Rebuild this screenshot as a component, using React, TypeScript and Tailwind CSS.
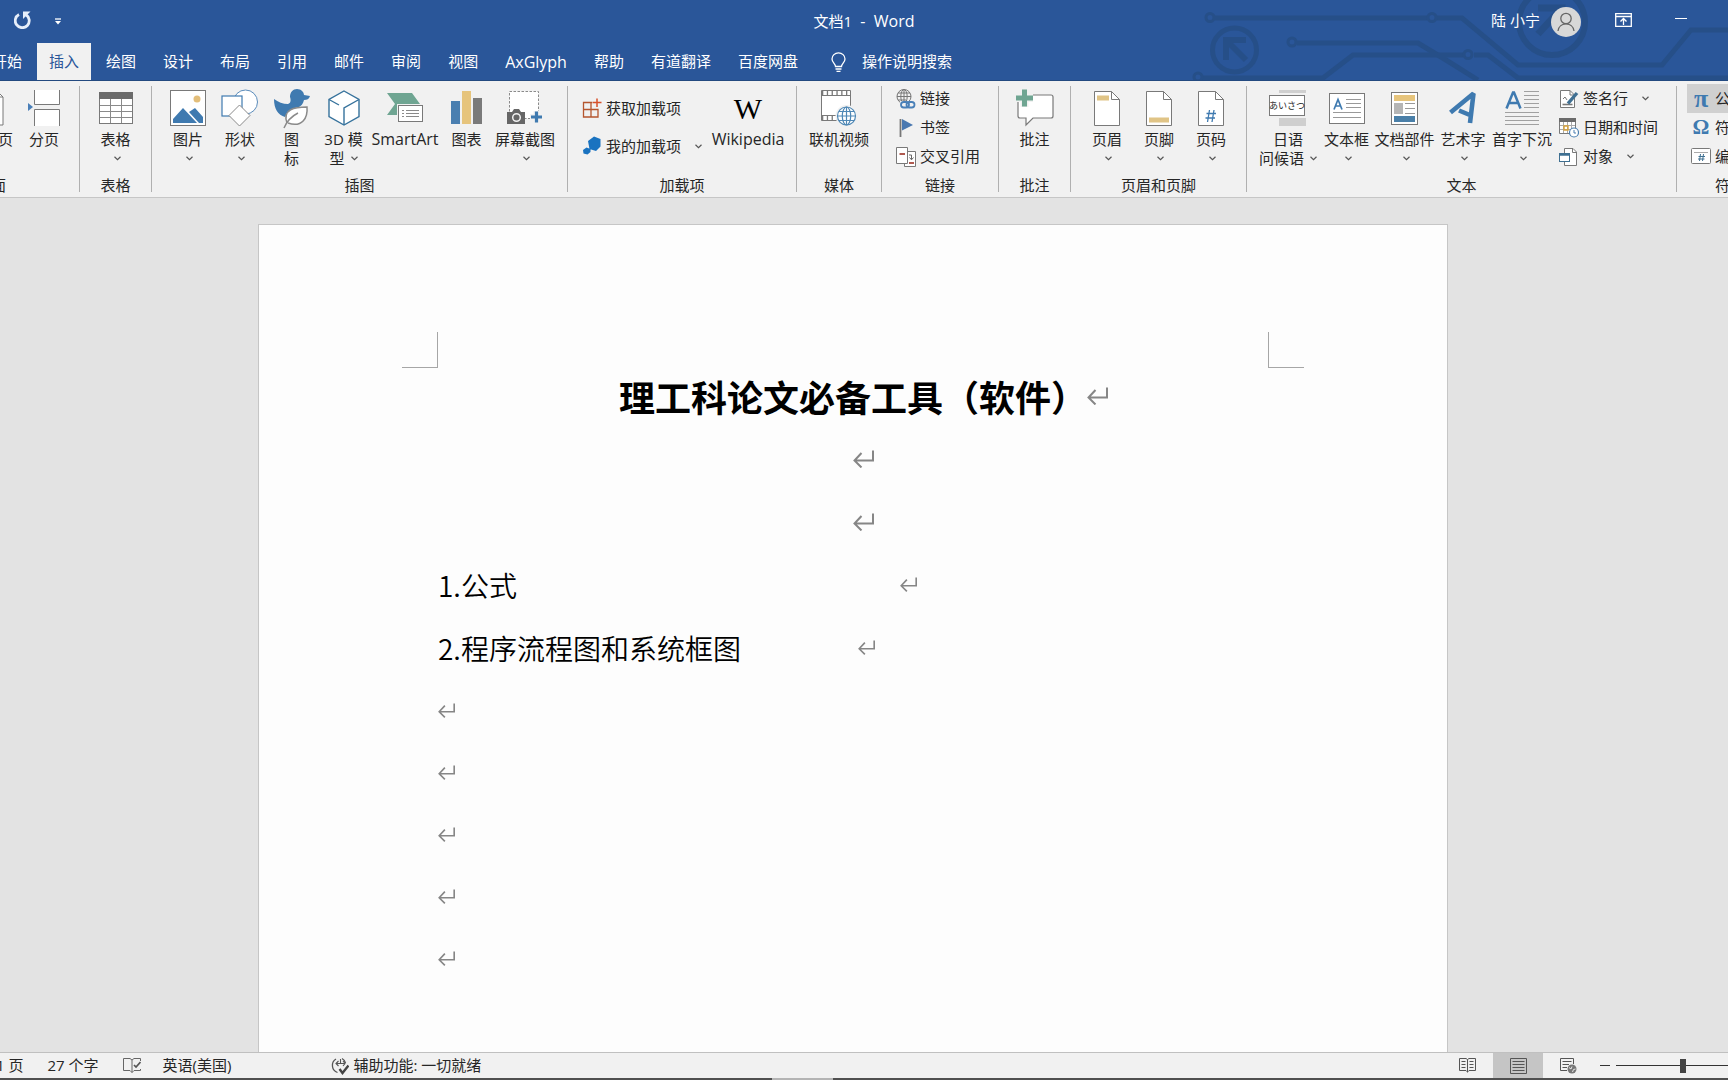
import React from "react";

type P = { children?: React.ReactNode };
const GREY = "#797979";
const BLUE = "#3f7ab0";

function Svg({ w, h, children }: { w: number; h: number } & P) {
  return (
    <svg width={w} height={h} viewBox={`0 0 ${w} ${h}`} fill="none" className="shrink-0" aria-hidden="true">
      {children}
    </svg>
  );
}

const Chevron = () => (
  <Svg w={7} h={5}>
    <path d="M0.5 0.8 3.5 3.6 6.5 0.8" stroke="#555" strokeWidth="1.2" />
  </Svg>
);

function Return({ big }: { big?: boolean }) {
  return (
    <svg width={big ? 21 : 17} height={big ? 18 : 15} viewBox="0 0 21 18" fill="none" className="shrink-0" aria-hidden="true">
      <path d="M20 0.5V10.5H1.5M8.5 3 1.5 10.5 8.5 17.5" stroke="#868686" strokeWidth="2" />
    </svg>
  );
}

/* ---------- large icons ---------- */
const BlankPageIcon = () => (
  <Svg w={26} h={36}>
    <path d="M1 1H19L25 7V35H1Z" fill="#fff" stroke={GREY} />
    <path d="M19 1V7H25" stroke={GREY} />
  </Svg>
);
const BreakIcon = () => (
  <Svg w={36} h={38}>
    <path d="M8.500 1V15.500H33.500V1M8.500 37V20.500H33.500V37" fill="#fff" stroke={GREY} />
    <path d="M2 14 7 18 2 22Z" fill="#4a7fb8" />
  </Svg>
);
const TableIcon = () => (
  <Svg w={34} h={32}>
    <rect x="0.5" y="0.5" width="33" height="31" fill="#fff" stroke={GREY} />
    <rect width="34" height="7" fill="#6b6b6b" />
    <path d="M11.500 7V31M22.500 7V31M1 13.500H33M1 19.500H33M1 25.500H33" stroke="#8a8a8a" />
  </Svg>
);
const PictureIcon = () => (
  <Svg w={36} h={36}>
    <rect x="0.5" y="0.5" width="35" height="35" fill="#fff" stroke={GREY} />
    <circle cx="27" cy="9" r="3.500" fill="#e3be7a" />
    <path d="M3 33V29L13 18 27 33ZM19 22 25 18 33 27V33H29Z" fill={BLUE} />
  </Svg>
);
const ShapesIcon = () => (
  <Svg w={38} h={38}>
    <circle cx="24.500" cy="13" r="12" fill="#fff" stroke="#5b8cbb" />
    <rect x="1" y="7" width="20" height="20" fill="#fff" stroke={BLUE} strokeWidth="1.200" />
    <path d="M18.500 16 29 26.500 18.500 37 8 26.500Z" fill="#fff" stroke="#8a8a8a" />
  </Svg>
);
const IconsIcon = () => (
  <Svg w={36} h={40}>
    <path d="M16 8C16 3 19 0 23 0C27 0 30 3 30 6L36 7C35 10 33 11 30 11C29 15 27 17 25 18C18 19 14 22 11 28C4 26 0 20 0 10C4 13 9 15 14 15C17 14 17 11 16 8Z" fill={BLUE} />
    <path d="M13 34C8 20 21 18 33 18C34 29 28 39 14 34" fill="#fff" stroke="#8a8a8a" strokeWidth="1.500" />
    <path d="M10 39C13 32 18 27 24 24" stroke="#8a8a8a" strokeWidth="1.500" />
  </Svg>
);
const CubeIcon = () => (
  <Svg w={32} h={36}>
    <path d="M16 1 31 9.500V26.500L16 35 1 26.500V9.500Z" fill="#fff" stroke="#36729c" strokeWidth="1.400" />
    <path d="M16 35V18L31 9.500M1 9.500 11 15" stroke="#36729c" strokeWidth="1.400" />
  </Svg>
);
const SmartArtIcon = () => (
  <Svg w={36} h={30}>
    <path d="M0 0H25L33 11 25 22H0L8 11Z" fill="#6fa592" />
    <rect x="10" y="11" width="26" height="19" fill="#f1f1f1" />
    <rect x="11.500" y="12.500" width="24" height="16" fill="#fff" stroke={GREY} />
    <path d="M15 17.500H17M15 20.500H17M15 23.500H17M19 17.500H32M19 20.500H32M19 23.500H32" stroke="#8a8a8a" />
  </Svg>
);
const ChartIcon = () => (
  <Svg w={32} h={34}>
    <rect x="0" y="10" width="9" height="23" fill="#4a7fb0" />
    <rect x="11" y="0" width="9" height="33" fill="#e6c47c" />
    <rect x="22" y="7" width="9" height="26" fill="#7a7a7a" />
  </Svg>
);
const ScreenshotIcon = () => (
  <Svg w={36} h={34}>
    <rect x="2.500" y="0.500" width="29" height="27" fill="#fff" stroke="#8a8a8a" strokeDasharray="2.500 1.500" />
    <path d="M0 21H5L7 18H12L14 21H18V33H0Z" fill="#666" />
    <circle cx="9.500" cy="26.500" r="3.800" fill="#666" stroke="#f1f1f1" strokeWidth="1.500" />
    <path d="M23 26H36M29.500 20V32" stroke="#f1f1f1" strokeWidth="6" />
    <path d="M24 26H35M29.500 20.500V31.500" stroke={BLUE} strokeWidth="3.200" />
  </Svg>
);
const VideoIcon = () => (
  <Svg w={36} h={36}>
    <path d="M0.500 0.500H29.500V30.500H0.500Z" fill="#fff" stroke={GREY} />
    <path d="M0 5.500H30M0 25.500H16" stroke={GREY} />
    <path d="M1 3H29M1 28H16" stroke={GREY} strokeWidth="4" strokeDasharray="1.300 3.500" />
    <circle cx="25.500" cy="26" r="11" fill="#f1f1f1" />
    <g stroke="#4f88b5" strokeWidth="1.200">
      <circle cx="25.500" cy="26" r="9" fill="#fff" />
      <ellipse cx="25.500" cy="26" rx="4.200" ry="9" />
      <path d="M25.500 17V35M16.500 26H34.500M18 21.500H33M18 30.500H33" />
    </g>
  </Svg>
);
const CommentIcon = () => (
  <Svg w={38} h={38}>
    <path d="M6 6H35Q37 6 37 8V27Q37 29 35 29H17L10 36V29H4Q2 29 2 27V8" fill="#fff" stroke={GREY} strokeWidth="1.200" />
    <path d="M8.500 0V18M0 9H17" stroke="#f1f1f1" strokeWidth="8" />
    <path d="M8.500 0.500V17.500M0 9H17" stroke="#6fa592" strokeWidth="5" />
  </Svg>
);
function DocIcon({ children }: P) {
  return (
    <Svg w={26} h={35}>
      <path d="M0.500 0.500H17.500L25.500 8.500V34.500H0.500Z" fill="#fff" stroke={GREY} />
      <path d="M17.500 0.500V8.500H25.500" stroke={GREY} />
      {children}
    </Svg>
  );
}
const HeaderIcon = () => <DocIcon><rect x="3" y="4.500" width="12" height="5" fill="#e0c486" /></DocIcon>;
const FooterIcon = () => <DocIcon><rect x="3" y="26.500" width="20" height="5" fill="#e0c486" /></DocIcon>;
const NumberIcon = () => <DocIcon><path d="M11.500 19 9.500 31M16 19 14 31M8.500 22.500H18M7.500 27H17" stroke={BLUE} strokeWidth="1.300" /></DocIcon>;
const GreetingIcon = () => (
  <span className="flex h-9 w-[38px] items-start bg-[linear-gradient(#cfcfcf,#cfcfcf)] bg-[length:27px_36px] bg-[position:10px_0] bg-no-repeat pt-[5px]">
    <span className="flex h-[21px] w-[36px] items-center justify-center border border-[#797979] bg-white text-[9px] leading-none ring-2 ring-[#f1f1f1]">
      <span className="whitespace-nowrap">あいさつ</span>
    </span>
  </span>
);
const TextBoxIcon = () => (
  <Svg w={36} h={31}>
    <rect x="0.500" y="0.500" width="35" height="30" fill="#fff" stroke={GREY} />
    <path d="M5 16.500 9 6.500 13 16.500M6.500 13H11.500" stroke={BLUE} strokeWidth="1.700" />
    <path d="M17 6.500H32M17 10.500H32M17 14.500H32M4 19.500H32M4 24.500H32" stroke="#999" />
  </Svg>
);
const PartsIcon = () => (
  <Svg w={27} h={33}>
    <rect x="0.500" y="0.500" width="26" height="32" fill="#fff" stroke={GREY} />
    <rect x="3" y="3" width="21" height="6" fill="#e6c47c" />
    <rect x="3" y="11" width="9" height="11" fill="#b5b5b5" />
    <path d="M14 11.500H24M14 16.500H24M14 21.500H24" stroke="#999" />
    <rect x="3" y="24" width="21" height="6" fill="#4a7fa8" />
  </Svg>
);
const WordArtIcon = () => (
  <Svg w={28} h={34}>
    <path d="M1.500 21.500 24.500 2.500 21 32M10 19.500 22 24.500" stroke={BLUE} strokeWidth="4.600" strokeLinejoin="bevel" />
  </Svg>
);
const DropCapIcon = () => (
  <Svg w={35} h={34}>
    <path d="M1.500 17.500 8 1.500H9L15.500 17.500M4 12H13" stroke={BLUE} strokeWidth="2.500" />
    <path d="M19 0.500H34M19 4.500H34M19 8.500H34M19 12.500H34M19 16.500H34M0 21.500H34M0 25.500H34M0 29.500H34M0 33.500H34" stroke="#a0a0a0" />
  </Svg>
);

/* ---------- small icons ---------- */
const AddinIcon = () => (
  <Svg w={20} h={20}>
    <path d="M1.500 4.500H9V19H1.500ZM1.500 11.500H16V19H9M9 11.500V4.500H10.500" stroke="#b5562f" strokeWidth="1.300" />
    <path d="M15 0.500V9M11 4.500H19.500" stroke="#d8502a" strokeWidth="1.500" />
  </Svg>
);
const MyAddinIcon = () => (
  <Svg w={20} h={20}>
    <path d="M12 0.500 18.500 3V10.500L14 15 7.500 13 6 5ZM4.500 11.500 8.500 13 8.500 16 5.500 18.500 1.500 17.500 1 14Z" fill="#1a73c0" />
  </Svg>
);
const LinkIcon = () => (
  <Svg w={20} h={20}>
    <g stroke="#777">
      <circle cx="8" cy="7.500" r="7" />
      <ellipse cx="8" cy="7.500" rx="3.200" ry="7" />
      <path d="M8 .5V14M1 7.500H15M2 4H14M2 11H10" />
    </g>
    <path d="M4 12H20V20H4Z" fill="#f1f1f1" />
    <rect x="5" y="13" width="8" height="5.500" rx="2.700" stroke="#4a80b8" strokeWidth="1.800" />
    <rect x="10.500" y="13" width="8" height="5.500" rx="2.700" stroke="#4a80b8" strokeWidth="1.800" />
  </Svg>
);
const BookmarkIcon = () => (
  <Svg w={20} h={20}>
    <path d="M4.500 1V19" stroke="#777" strokeWidth="1.800" />
    <path d="M6 1 17 7 6 12.500Z" fill="#4a78b0" />
  </Svg>
);
const CrossRefIcon = () => (
  <Svg w={20} h={20}>
    <path d="M8.500 4.500H19.500V19.500H8.500Z" fill="#fff" stroke={GREY} />
    <path d="M0.500 0.500H11.500V16.500H0.500Z" fill="#fff" stroke={GREY} />
    <path d="M3.500 7H9M13 16H18" stroke="#b05a50" strokeWidth="1.800" />
    <path d="M13 8H15.500V12.500M13.500 10.500 15.500 12.800 17.500 10.500" stroke="#666" />
  </Svg>
);
const SignIcon = () => (
  <Svg w={20} h={20}>
    <path d="M1.500 1.500H11L15.500 6V18.500H1.500Z" fill="#fff" stroke={GREY} />
    <path d="M11 1.500V6H15.500" stroke={GREY} />
    <path d="M3.500 15.500H13.500" stroke="#777" strokeWidth="1.600" />
    <path d="M18 4 9 14.500" stroke="#3f6f92" strokeWidth="3.400" />
    <path d="M4 10 6 8 8 11" stroke="#777" />
  </Svg>
);
const DateIcon = () => (
  <Svg w={20} h={20}>
    <path d="M0.500 0.500H16.500V15.500H0.500Z" fill="#fff" stroke={GREY} />
    <path d="M0 0H17V4H0Z" fill="#6b6b6b" />
    <path d="M4.500 4V15M8.500 4V15M12.500 4V15M1 7.500H16M1 11.500H16" stroke="#aaa" />
    <path d="M5 8H9V12H5Z" stroke="#d6a23c" strokeWidth="1.400" />
    <circle cx="15" cy="14.500" r="4.500" fill="#fff" stroke="#4a7fb0" strokeWidth="1.200" />
    <path d="M15 12V15H17" stroke="#4a7fb0" />
  </Svg>
);
const ObjectIcon = () => (
  <Svg w={20} h={20}>
    <path d="M5.500 1.500H14L17.500 5V18.500H5.500Z" fill="#fff" stroke={GREY} />
    <path d="M13.500 1.500V5.500H17.500" stroke={GREY} />
    <rect x="0.500" y="6.500" width="10" height="8" fill="#fff" stroke="#3f7092" />
    <path d="M0 7.500H11" stroke="#3f7092" strokeWidth="2.500" />
  </Svg>
);
const NumberBoxIcon = () => (
  <Svg w={20} h={17}>
    <rect x="0.500" y="0.500" width="19" height="15" rx="1" fill="#fff" stroke={GREY} />
    <path d="M3 4.500H17" stroke="#aaa" />
    <path d="M9.500 6 8.500 13M12.500 6 11.500 13M7.500 8.500H14M7 11H13.500" stroke="#3f7092" />
  </Svg>
);

/* ---------- ribbon parts ---------- */
function Group({ label, labelClass = "", children }: { label: string; labelClass?: string } & P) {
  return (
    <section aria-label={label} className="flex shrink-0">
      <div className="flex flex-col">
        <div className="flex h-[94px]">{children}</div>
        <div className={"text-center leading-5 " + labelClass}>{label}</div>
      </div>
      <div className="mt-[5px] h-[106px] w-px bg-[#b0b0b0]" />
    </section>
  );
}

function Big({ icon, label, label2, drop, w, latin }: { icon: React.ReactNode; label: string; label2?: string; drop?: boolean; w: string; latin?: boolean }) {
  return (
    <button type="button" className={"flex shrink-0 flex-col items-center whitespace-nowrap pt-2 leading-[19px] " + w}>
      <span className="mb-[3px] grid h-[38px] place-items-center">{icon}</span>
      <span className={latin ? "text-base leading-[19px]" : ""}>{label}</span>
      {(label2 || drop) && (
        <span className="flex h-[19px] items-center gap-1">
          {label2}
          {drop && <span className={label2 ? "pl-0.5" : "pl-[3px]"}><Chevron /></span>}
        </span>
      )}
    </button>
  );
}

function Small({ icon, label, drop, h = "h-[29px]", className = "" }: { icon: React.ReactNode; label: string; drop?: boolean; h?: string; className?: string }) {
  return (
    <button type="button" className={"flex shrink-0 items-center gap-1 whitespace-nowrap " + h + " " + className}>
      {icon}
      <span>{label}</span>
      {drop && <span className="pl-[10px]"><Chevron /></span>}
    </button>
  );
}

const tabs = ["开始", "插入", "绘图", "设计", "布局", "引用", "邮件", "审阅", "视图", "AxGlyph", "帮助", "有道翻译", "百度网盘"];

function Circuit() {
  return (
    <svg width="540" height="80" viewBox="0 0 540 80" fill="none" className="absolute right-0 top-0" aria-hidden="true">
      <g stroke="#264e86" strokeWidth="5" opacity="0.85">
        <circle cx="22" cy="17.500" r="4" strokeWidth="3" />
        <path d="M27 18H239M249 18H274L330 65H474L503 30H540" />
        <circle cx="244" cy="17.500" r="4" strokeWidth="3" />
        <circle cx="104" cy="42" r="4" strokeWidth="3" />
        <path d="M109 43H230L258 60 290 80" />
        <path d="M13 78H135L165 55H275M286 55H300L330 78H540" />
        <circle cx="280" cy="54.500" r="4" strokeWidth="3" />
        <circle cx="10" cy="77" r="4" strokeWidth="3" />
        <circle cx="46.500" cy="50" r="22" />
        <path d="M38 60V40H58M38 40 58 60" strokeWidth="6" />
        <circle cx="364" cy="22" r="33" strokeWidth="6" />
        <path d="M350 8H374V30M374 8 350 34" strokeWidth="7" />
      </g>
    </svg>
  );
}

export default function App() {
  return (
    <div className="flex h-screen flex-col overflow-hidden bg-[#e3e3e3] font-['Open_Sans','Noto_Sans_CJK_SC',sans-serif] text-[15px] text-[#262626]">
      <header className="relative shrink-0 overflow-hidden border-b border-[#234a80] bg-[#2a5699] text-white">
        <Circuit />
        <div className="relative grid h-[43px] grid-cols-[1fr_auto_1fr] items-center">
          <div className="flex items-center gap-6 pl-[14px]">
            <button type="button" aria-label="重复" className="pb-[3px]">
              <Svg w={17} h={18}>
                <path d="M5 3.500A7 7 0 1 0 12 3.800" stroke="#e6eefa" strokeWidth="2.800" />
                <path d="M9 0.500H16.500L9 8Z" fill="#e6eefa" />
              </Svg>
            </button>
            <button type="button" aria-label="自定义快速访问工具栏">
              <Svg w={6} h={7}>
                <path d="M0 1H6" stroke="#fff" strokeWidth="1.300" />
                <path d="M0 3H6L3 6.500Z" fill="#fff" />
              </Svg>
            </button>
          </div>
          <h1 className="whitespace-pre">文档1<span className="text-base leading-5">{"  -  Word"}</span></h1>
          <div className="flex items-center justify-end pr-[41px]">
            <span className="pb-0.5">陆 小宁</span>
            <span className="ml-[11px] grid h-[30px] w-[30px] place-items-center rounded-full bg-[#d8d8d8]">
              <Svg w={18} h={20}>
                <circle cx="9" cy="6.500" r="5.200" stroke="#666" strokeWidth="1.300" />
                <path d="M1 19C2 9.500 16 9.500 17 19" stroke="#666" strokeWidth="1.300" />
              </Svg>
            </span>
            <button type="button" aria-label="功能区显示选项" className="ml-[34px] pb-1">
              <Svg w={17} h={14}>
                <path d="M0.700 0.700H16.300V13.300H0.700ZM1 3.500H16" stroke="#fff" strokeWidth="1.300" />
                <path d="M8.500 12V6M5.500 8.500 8.500 5.500 11.500 8.500" stroke="#fff" strokeWidth="1.300" />
              </Svg>
            </button>
            <button type="button" aria-label="最小化" className="ml-[43px] h-5 w-3 pb-1.5">
              <span className="block h-px w-3 bg-white" />
            </button>
          </div>
        </div>
        <nav className="relative -ml-5 flex h-[37px] items-stretch gap-[3px] whitespace-nowrap">
          {tabs.map((t) => (
            <button
              key={t}
              type="button"
              className={t === "插入" ? "bg-[#f1f1f1] px-3 text-[#2a5699]" : t === "AxGlyph" ? "px-3 text-base" : "px-3"}
            >
              {t}
            </button>
          ))}
          <button type="button" className="flex items-center gap-4 pl-[18px]">
            <Svg w={15} h={20}>
              <path d="M4.500 14.500C4.500 11.500 1 10.500 1 7A6.500 6.200 0 0 1 14 7C14 10.500 10.500 11.500 10.500 14.500Z" stroke="#fff" strokeWidth="1.300" />
              <path d="M4.500 17H10.500M5.500 19.300H9.500" stroke="#fff" strokeWidth="1.300" />
            </Svg>
            操作说明搜索
          </button>
        </nav>
      </header>

      <div className="flex h-[117px] shrink-0 overflow-hidden border-b border-[#c6c6c6] bg-[#f1f1f1]">
        <div className="-ml-9 flex shrink-0">
          <Group label="页面" labelClass="w-[54px]">
            <Big icon={<BlankPageIcon />} label="空白页" w="w-[53px]" />
            <Big icon={<BreakIcon />} label="分页" w="w-[54px] mr-2" />
          </Group>
          <Group label="表格">
            <Big icon={<TableIcon />} label="表格" drop w="w-[71px]" />
          </Group>
          <Group label="插图">
            <Big icon={<PictureIcon />} label="图片" drop w="ml-[10px] w-[52px]" />
            <Big icon={<ShapesIcon />} label="形状" drop w="w-[52px]" />
            <Big icon={<IconsIcon />} label="图" label2="标" w="w-[51px]" />
            <Big icon={<CubeIcon />} label="3D 模" label2="型" drop w="w-[53px]" />
            <Big icon={<SmartArtIcon />} label="SmartArt" latin w="w-[70px]" />
            <Big icon={<ChartIcon />} label="图表" w="w-[53px]" />
            <Big icon={<ScreenshotIcon />} label="屏幕截图" drop w="w-[64px] mr-[10px]" />
          </Group>
          <Group label="加载项">
            <div className="flex w-[138px] flex-col pl-[14px] pt-2">
              <Small icon={<AddinIcon />} label="获取加载项" h="h-[38px]" />
              <Small icon={<MyAddinIcon />} label="我的加载项" h="h-[38px]" drop />
            </div>
            <Big icon={<span className="font-['Liberation_Serif',serif] text-[30px] text-black">W</span>} label="Wikipedia" latin w="w-[84px] mr-[6px]" />
          </Group>
          <Group label="媒体">
            <Big icon={<VideoIcon />} label="联机视频" w="w-[84px]" />
          </Group>
          <Group label="链接">
            <div className="flex w-[116px] flex-col pl-[14px] pt-[3px]">
              <Small icon={<LinkIcon />} label="链接" />
              <Small icon={<BookmarkIcon />} label="书签" />
              <Small icon={<CrossRefIcon />} label="交叉引用" />
            </div>
          </Group>
          <Group label="批注">
            <Big icon={<CommentIcon />} label="批注" w="w-[71px]" />
          </Group>
          <Group label="页眉和页脚">
            <Big icon={<HeaderIcon />} label="页眉" drop w="ml-[10px] w-[52px]" />
            <Big icon={<FooterIcon />} label="页脚" drop w="w-[52px]" />
            <Big icon={<NumberIcon />} label="页码" drop w="w-[52px] mr-[9px]" />
          </Group>
          <Group label="文本">
            <Big icon={<GreetingIcon />} label="日语" label2="问候语" drop w="ml-[10px] w-[62px]" />
            <Big icon={<TextBoxIcon />} label="文本框" drop w="w-[55px]" />
            <Big icon={<PartsIcon />} label="文档部件" drop w="w-[61px]" />
            <Big icon={<WordArtIcon />} label="艺术字" drop w="w-[56px]" />
            <Big icon={<DropCapIcon />} label="首字下沉" drop w="w-[62px]" />
            <div className="flex w-[123px] flex-col pl-[6px] pt-[3px]">
              <Small icon={<SignIcon />} label="签名行" drop />
              <Small icon={<DateIcon />} label="日期和时间" />
              <Small icon={<ObjectIcon />} label="对象" drop />
            </div>
          </Group>
          <Group label="符号">
            <div className="flex w-[106px] flex-col pl-[10px] pt-[3px]">
              <Small className="bg-[#d0d0d0] pl-1" icon={<span className="w-5 text-center font-['Liberation_Serif',serif] text-[26px] font-bold leading-none text-[#3f7ab0]">π</span>} label="公式" />
              <Small className="pl-1" icon={<span className="w-5 text-center font-['Liberation_Serif',serif] text-[21px] font-bold leading-none text-[#3f7ab0]">Ω</span>} label="符号" />
              <Small className="pl-1" icon={<NumberBoxIcon />} label="编号" />
            </div>
          </Group>
        </div>
      </div>

      <main className="flex min-h-0 flex-1 justify-center overflow-hidden pr-[22px] pt-[26px]">
        <article className="w-full max-w-[1190px] border border-b-0 border-[#c6c6c6] bg-[#fdfdfd] pt-[107px] font-['Noto_Sans_CJK_SC',sans-serif] text-black">
          <div className="flex h-8 justify-between px-[143px]">
            <div className="h-9 w-9 border-b border-r border-[#a6a6a6]" />
            <div className="h-9 w-9 border-b border-l border-[#a6a6a6]" />
          </div>
          <div className="px-[179px]">
            <h2 className="flex h-[63px] items-center justify-center pl-[21px] text-[36px] font-bold">
              理工科论文必备工具（软件）
              <Return big />
            </h2>
            <div className="flex h-[63px] items-center justify-center pl-[21px]"><Return big /></div>
            <div className="flex h-[63px] items-center justify-center pl-[21px]"><Return big /></div>
            <p className="flex h-[63px] items-center text-[28px] font-[350]">
              <span className="w-[462px]">1.公式</span>
              <Return />
            </p>
            <p className="flex h-[63px] items-center text-[28px] font-[350]">
              <span className="w-[420px]">2.程序流程图和系统框图</span>
              <Return />
            </p>
            {[0, 1, 2, 3, 4].map((i) => (
              <p key={i} className="flex h-[62px] items-center"><Return /></p>
            ))}
          </div>
        </article>
      </main>

      <footer className="flex h-[26px] shrink-0 items-center overflow-hidden whitespace-nowrap border-t border-t-[#c0c0c0] bg-[#f1f1f1]">
        <span className="-ml-1">1 页</span>
        <span className="ml-6">27 个字</span>
        <button type="button" aria-label="校对" className="ml-6">
          <Svg w={18} h={15}>
            <path d="M9 2V14.500M9 2 7 .5H.5V12.500H7L9 14.500 11 12.500H17.500V11M9 2 11 .5H17.500V3" stroke="#666" />
            <path d="M11 7 13 9 17.500 4" stroke="#555" strokeWidth="1.700" />
          </Svg>
        </button>
        <span className="ml-[22px]">英语(美国)</span>
        <button type="button" className="ml-[100px] flex items-center gap-1">
          <Svg w={18} h={18}>
            <path d="M5 2A7.500 7.500 0 0 0 6.500 15.500M11 1.500A7 7 0 0 1 14.500 6" stroke="#555" strokeWidth="1.300" />
            <path d="M5 6.500H14M7.500 4 5 6.500 7.500 9M12 4 14 6.500 12 9M9.500 2V7" stroke="#555" strokeWidth="1.100" />
            <path d="M8.500 12 11.500 16 17.500 8.500" stroke="#444" strokeWidth="2.400" />
          </Svg>
          辅助功能: 一切就绪
        </button>
        <div className="ml-auto flex h-full shrink-0 items-center">
          <button type="button" aria-label="阅读视图" className="mr-[17px]">
            <Svg w={17} h={15}>
              <path d="M8.500 1.500V14.500M8.500 1.500 7 .5H.5V12.500H7L8.500 14 10 12.500H16.500V.5H10Z" stroke="#555" />
              <path d="M2.500 3.500H6.500M2.500 6.500H6.500M2.500 9.500H6.500M10.500 3.500H14.500M10.500 6.500H14.500M10.500 9.500H14.500" stroke="#555" />
            </Svg>
          </button>
          <button type="button" aria-label="页面视图" className="grid h-full w-[50px] place-items-center bg-[#c5c5c5]">
            <Svg w={17} h={16}>
              <path d="M.5 .5H16.500V15.500H.5ZM2.500 3.500H14.500M2.500 6.500H14.500M2.500 9.500H14.500M2.500 12.500H14.500" stroke="#555" />
            </Svg>
          </button>
          <button type="button" aria-label="Web 版式视图" className="ml-[17px]">
            <Svg w={17} h={16}>
              <path d="M7 12.500H.5V.5H13.500V6M2.500 3.500H11.500M2.500 6.500H9M2.500 9.500H7" stroke="#555" />
              <circle cx="12" cy="11" r="4.500" fill="#777" />
              <path d="M9 9.500 11 11 12 8.500M12.500 14 13.500 11.500 15.500 11" stroke="#e8e8e8" />
            </Svg>
          </button>
          <button type="button" aria-label="缩小" className="ml-[23px] grid h-5 w-[10px] place-items-center">
            <span className="block h-px w-[10px] bg-[#333]" />
          </button>
          <input
            type="range"
            aria-label="缩放"
            defaultValue={50}
            className="-mr-[21px] ml-[6px] h-[14px] w-[133px] shrink-0 appearance-none bg-[linear-gradient(#333,#333)] bg-[length:100%_1px] bg-center bg-no-repeat [&::-webkit-slider-thumb]:h-[14px] [&::-webkit-slider-thumb]:w-[6px] [&::-webkit-slider-thumb]:appearance-none [&::-webkit-slider-thumb]:bg-[#444]"
          />
        </div>
      </footer>
      <div className="flex h-0.5 shrink-0 bg-[#505050]">
        <div className="w-[772px]" />
        <div className="w-[61px] bg-[#b4b4b4]" />
      </div>
    </div>
  );
}
